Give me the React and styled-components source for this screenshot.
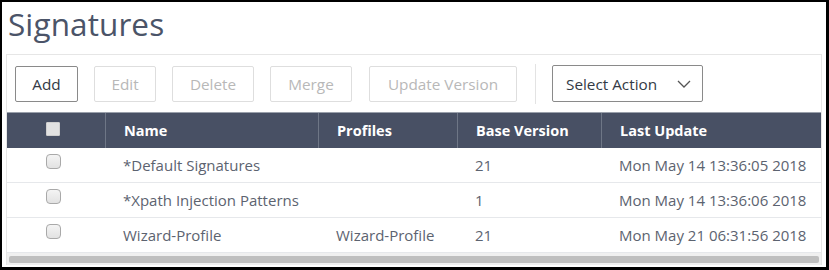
import React from "react";
import styled, { createGlobalStyle } from "styled-components";

const Global = createGlobalStyle`
  html, body { margin: 0; padding: 0; background: #fff; }
  body { font-family: "Open Sans", "Liberation Sans", sans-serif; }
  * { box-sizing: border-box; }
`;

const Frame = styled.div`
  width: 829px;
  height: 270px;
  border: 2px solid #000;
  border-right-width: 3px;
  border-bottom-width: 3px;
  background: #fff;
  overflow: hidden;
  display: flex;
  flex-direction: column;
`;

const Title = styled.h1`
  margin: 0;
  height: 52px;
  padding: 0 0 0 6px;
  font-weight: 400;
  font-size: 31.5px;
  line-height: 44px;
  color: #4b5468;
  letter-spacing: 0.1px;
`;

const Panel = styled.div`
  margin: 0 4px 0 4px;
  border: 1px solid #e6e6e6;
  border-bottom: none;
  display: flex;
  flex-direction: column;
`;

const Toolbar = styled.div`
  display: flex;
  align-items: center;
  padding: 10px 8px 10px 8px;
  height: 57px;
`;

const Btn = styled.button`
  width: ${(p) => p.$w}px;
  height: 36px;
  margin-right: ${(p) => p.$gap ?? 16}px;
  padding: 0;
  background: #fff;
  border: 1px solid ${(p) => (p.disabled ? "#dedede" : "#8a8a8a")};
  border-radius: 2px;
  font-family: "Open Sans", "Liberation Sans", sans-serif;
  font-size: 15.3px;
  color: ${(p) => (p.disabled ? "#b8b8b8" : "#333a45")};
  cursor: default;
`;

const Sep = styled.div`
  width: 1px;
  height: 40px;
  background: #e3e3e3;
  margin: 0 16px 0 1px;
`;

const Select = styled.div`
  width: 151px;
  height: 37px;
  border: 1px solid #8a8a8a;
  border-radius: 2px;
  display: flex;
  align-items: center;
  justify-content: space-between;
  padding: 0 11px 0 13px;
  font-size: 15.3px;
  color: #333a45;
`;

const cols = "98px 213px 139px 144px 1fr";

const HeadRow = styled.div`
  display: grid;
  grid-template-columns: ${cols};
  height: 36px;
  background: #485064;
  border-top: 1px solid #9aa0ab;
`;

const HeadCell = styled.div`
  display: flex;
  align-items: center;
  justify-content: ${(p) => (p.$center ? "center" : "flex-start")};
  padding-left: ${(p) => (p.$center ? 0 : 18)}px;
  border-left: ${(p) => (p.$first ? "none" : "1px solid #6e7686")};
  color: #fff;
  font-weight: 700;
  font-size: 14.5px;
`;

const HeadBox = styled.span`
  width: 14px;
  height: 14px;
  background: #e2e2e2;
  border: 1px solid #cfcfcf;
  border-radius: 1px;
  margin: 0 6px 4px 0;
`;

const Row = styled.div`
  display: grid;
  grid-template-columns: ${cols};
  height: 35px;
  border-bottom: 1px solid #e6e8eb;
`;

const Cell = styled.div`
  display: flex;
  align-items: center;
  justify-content: ${(p) => (p.$center ? "center" : "flex-start")};
  padding-left: ${(p) => (p.$center ? 0 : 18)}px;
  color: #5c6370;
  font-size: 15px;
  white-space: nowrap;
`;

const RowBox = styled.span`
  width: 15px;
  height: 15px;
  border: 1px solid #a9a9a9;
  border-radius: 4px;
  background: linear-gradient(#f4f4f4, #e2e2e2);
  margin: 0 6px 8px 0;
`;

const Scroll = styled.div`
  height: 12px;
  background: #f0f0f0;
  padding: 3px 2px 2px 2px;
`;

const Thumb = styled.div`
  height: 7px;
  background: #bfbfbf;
  border-radius: 2px;
`;

const rows = [
  ["*Default Signatures", "", "21", "Mon May 14 13:36:05 2018"],
  ["*Xpath Injection Patterns", "", "1", "Mon May 14 13:36:06 2018"],
  ["Wizard-Profile", "Wizard-Profile", "21", "Mon May 21 06:31:56 2018"],
];

export default function App() {
  return (
    <>
      <Global />
      <Frame>
        <Title>Signatures</Title>
        <Panel>
          <Toolbar>
            <Btn $w={63}>Add</Btn>
            <Btn $w={62} disabled>Edit</Btn>
            <Btn $w={82} disabled>Delete</Btn>
            <Btn $w={82} $gap={17} disabled>Merge</Btn>
            <Btn $w={148} $gap={17} disabled>Update Version</Btn>
            <Sep />
            <Select>
              <span>Select Action</span>
              <svg width="14" height="8" viewBox="0 0 14 8">
                <path d="M1 1l6 6 6-6" fill="none" stroke="#555" strokeWidth="1.3" />
              </svg>
            </Select>
          </Toolbar>
          <HeadRow>
            <HeadCell $first $center>
              <HeadBox />
            </HeadCell>
            <HeadCell>Name</HeadCell>
            <HeadCell>Profiles</HeadCell>
            <HeadCell>Base Version</HeadCell>
            <HeadCell>Last Update</HeadCell>
          </HeadRow>
          {rows.map((r) => (
            <Row key={r[0]}>
              <Cell $center>
                <RowBox />
              </Cell>
              {r.map((v, i) => (
                <Cell key={i}>{v}</Cell>
              ))}
            </Row>
          ))}
          <Scroll>
            <Thumb />
          </Scroll>
        </Panel>
      </Frame>
    </>
  );
}
